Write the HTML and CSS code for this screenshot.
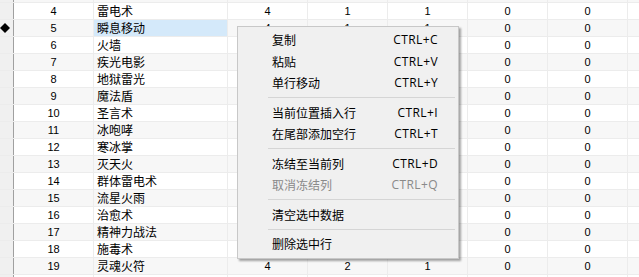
FILE: index.html
```html
<!DOCTYPE html>
<html>
<head>
<meta charset="utf-8">
<link rel="stylesheet" href="styles.css">
</head>
<body>
<div class="view">
<div class="grid">
  <div class="row odd"><div class="hdr"></div><div class="c num"></div><div class="c name"></div><div class="c v"></div><div class="c v"></div><div class="c v"></div><div class="c v"></div><div class="c v"></div><div class="c v"></div></div>
  <div class="row"><div class="hdr"></div><div class="c num">4</div><div class="c name">雷电术</div><div class="c v">4</div><div class="c v">1</div><div class="c v">1</div><div class="c v">0</div><div class="c v">0</div><div class="c v"></div></div>
  <div class="row odd"><div class="hdr"><svg class="mark" width="10" height="10" viewBox="0 0 10 10"><polygon points="5,0 10,5 5,10 0,5" fill="#000"/></svg></div><div class="c num">5</div><div class="c name sel">瞬息移动</div><div class="c v">4</div><div class="c v">1</div><div class="c v">1</div><div class="c v">0</div><div class="c v">0</div><div class="c v"></div></div>
  <div class="row"><div class="hdr"></div><div class="c num">6</div><div class="c name">火墙</div><div class="c v"></div><div class="c v"></div><div class="c v"></div><div class="c v">0</div><div class="c v">0</div><div class="c v"></div></div>
  <div class="row odd"><div class="hdr"></div><div class="c num">7</div><div class="c name">疾光电影</div><div class="c v"></div><div class="c v"></div><div class="c v"></div><div class="c v">0</div><div class="c v">0</div><div class="c v"></div></div>
  <div class="row"><div class="hdr"></div><div class="c num">8</div><div class="c name">地狱雷光</div><div class="c v"></div><div class="c v"></div><div class="c v"></div><div class="c v">0</div><div class="c v">0</div><div class="c v"></div></div>
  <div class="row odd"><div class="hdr"></div><div class="c num">9</div><div class="c name">魔法盾</div><div class="c v"></div><div class="c v"></div><div class="c v"></div><div class="c v">0</div><div class="c v">0</div><div class="c v"></div></div>
  <div class="row"><div class="hdr"></div><div class="c num">10</div><div class="c name">圣言术</div><div class="c v"></div><div class="c v"></div><div class="c v"></div><div class="c v">0</div><div class="c v">0</div><div class="c v"></div></div>
  <div class="row odd"><div class="hdr"></div><div class="c num">11</div><div class="c name">冰咆哮</div><div class="c v"></div><div class="c v"></div><div class="c v"></div><div class="c v">0</div><div class="c v">0</div><div class="c v"></div></div>
  <div class="row"><div class="hdr"></div><div class="c num">12</div><div class="c name">寒冰掌</div><div class="c v"></div><div class="c v"></div><div class="c v"></div><div class="c v">0</div><div class="c v">0</div><div class="c v"></div></div>
  <div class="row odd"><div class="hdr"></div><div class="c num">13</div><div class="c name">灭天火</div><div class="c v"></div><div class="c v"></div><div class="c v"></div><div class="c v">0</div><div class="c v">0</div><div class="c v"></div></div>
  <div class="row"><div class="hdr"></div><div class="c num">14</div><div class="c name">群体雷电术</div><div class="c v"></div><div class="c v"></div><div class="c v"></div><div class="c v">0</div><div class="c v">0</div><div class="c v"></div></div>
  <div class="row odd"><div class="hdr"></div><div class="c num">15</div><div class="c name">流星火雨</div><div class="c v"></div><div class="c v"></div><div class="c v"></div><div class="c v">0</div><div class="c v">0</div><div class="c v"></div></div>
  <div class="row"><div class="hdr"></div><div class="c num">16</div><div class="c name">治愈术</div><div class="c v"></div><div class="c v"></div><div class="c v"></div><div class="c v">0</div><div class="c v">0</div><div class="c v"></div></div>
  <div class="row odd"><div class="hdr"></div><div class="c num">17</div><div class="c name">精神力战法</div><div class="c v"></div><div class="c v"></div><div class="c v"></div><div class="c v">0</div><div class="c v">0</div><div class="c v"></div></div>
  <div class="row"><div class="hdr"></div><div class="c num">18</div><div class="c name">施毒术</div><div class="c v"></div><div class="c v"></div><div class="c v"></div><div class="c v">0</div><div class="c v">0</div><div class="c v"></div></div>
  <div class="row odd"><div class="hdr"></div><div class="c num">19</div><div class="c name">灵魂火符</div><div class="c v">4</div><div class="c v">2</div><div class="c v">1</div><div class="c v">0</div><div class="c v">0</div><div class="c v"></div></div>
  <div class="row"><div class="hdr"></div><div class="c num"></div><div class="c name"></div><div class="c v"></div><div class="c v"></div><div class="c v"></div><div class="c v"></div><div class="c v"></div><div class="c v"></div></div>
</div>
</div>

<div class="menu">
  <div class="item"><span class="label">复制</span><span class="key">CTRL+C</span></div>
  <div class="item"><span class="label">粘贴</span><span class="key">CTRL+V</span></div>
  <div class="item"><span class="label">单行移动</span><span class="key">CTRL+Y</span></div>
  <div class="sep"></div>
  <div class="item"><span class="label">当前位置插入行</span><span class="key">CTRL+I</span></div>
  <div class="item"><span class="label">在尾部添加空行</span><span class="key">CTRL+T</span></div>
  <div class="sep"></div>
  <div class="item"><span class="label">冻结至当前列</span><span class="key">CTRL+D</span></div>
  <div class="item disabled"><span class="label">取消冻结列</span><span class="key">CTRL+Q</span></div>
  <div class="sep"></div>
  <div class="item"><span class="label">清空选中数据</span></div>
  <div class="sep"></div>
  <div class="item"><span class="label">删除选中行</span></div>
</div>
</body>
</html>
```

FILE: styles.css
```css
html, body {
  margin: 0;
  padding: 0;
  background: #ffffff;
  overflow: hidden;
}
body {
  width: 639px;
  height: 277px;
  position: relative;
  font-family: "Liberation Sans", Arial, "Noto Sans CJK SC", sans-serif;
  color: #000;
}
.view {
  width: 639px;
  height: 277px;
  overflow: hidden;
}
.grid {
  margin-top: -14px;
}
.row {
  display: flex;
  height: 16px;
  border-bottom: 1px solid #ececec;
  background: #ffffff;
}
.row.odd {
  background: #f7f7f7;
}
.hdr {
  width: 13px;
  flex: none;
  background: #f0f0f0;
  border-right: 1px solid #a0a0a0;
  display: flex;
  align-items: center;
  justify-content: flex-start;
}
.mark {
  display: block;
}
.c {
  flex: none;
  border-right: 1px solid #ececec;
  font-size: 11px;
  line-height: 16px;
  white-space: nowrap;
  overflow: hidden;
}
.num {
  width: 79px;
  text-align: center;
}
.name {
  width: 130px;
  padding-left: 3px;
  font-family: "Noto Sans CJK SC", sans-serif;
  font-size: 12px;
}
.name.sel {
  background: #d4e9fa;
}
.v {
  width: 79px;
  text-align: center;
}
.v:last-child {
  width: 11px;
  border-right: 0;
}
.menu {
  position: absolute;
  left: 237px;
  top: 26px;
  width: 220px;
  height: 229px;
  box-sizing: content-box;
  background: #f0f0f0;
  border: 1px solid #c8c8c8;
  box-shadow: 2px 2px 2px rgba(0, 0, 0, 0.35);
  padding: 2px 0 0 0;
  font-family: "Noto Sans CJK SC", "Microsoft YaHei", sans-serif;
  font-size: 12px;
}
.item {
  display: flex;
  align-items: center;
  height: 21.5px;
  padding-left: 34px;
  padding-right: 20px;
  color: #000;
}
.item .key {
  margin-left: auto;
  font-family: "Open Sans", "Noto Sans", sans-serif;
  font-size: 12px;
  letter-spacing: 0.4px;
}
.item.disabled {
  color: #8a8a8a;
}
.sep {
  height: 1px;
  margin: 3.5px 3px 3.5px 30px;
  background: #d5d5d5;
}
```
